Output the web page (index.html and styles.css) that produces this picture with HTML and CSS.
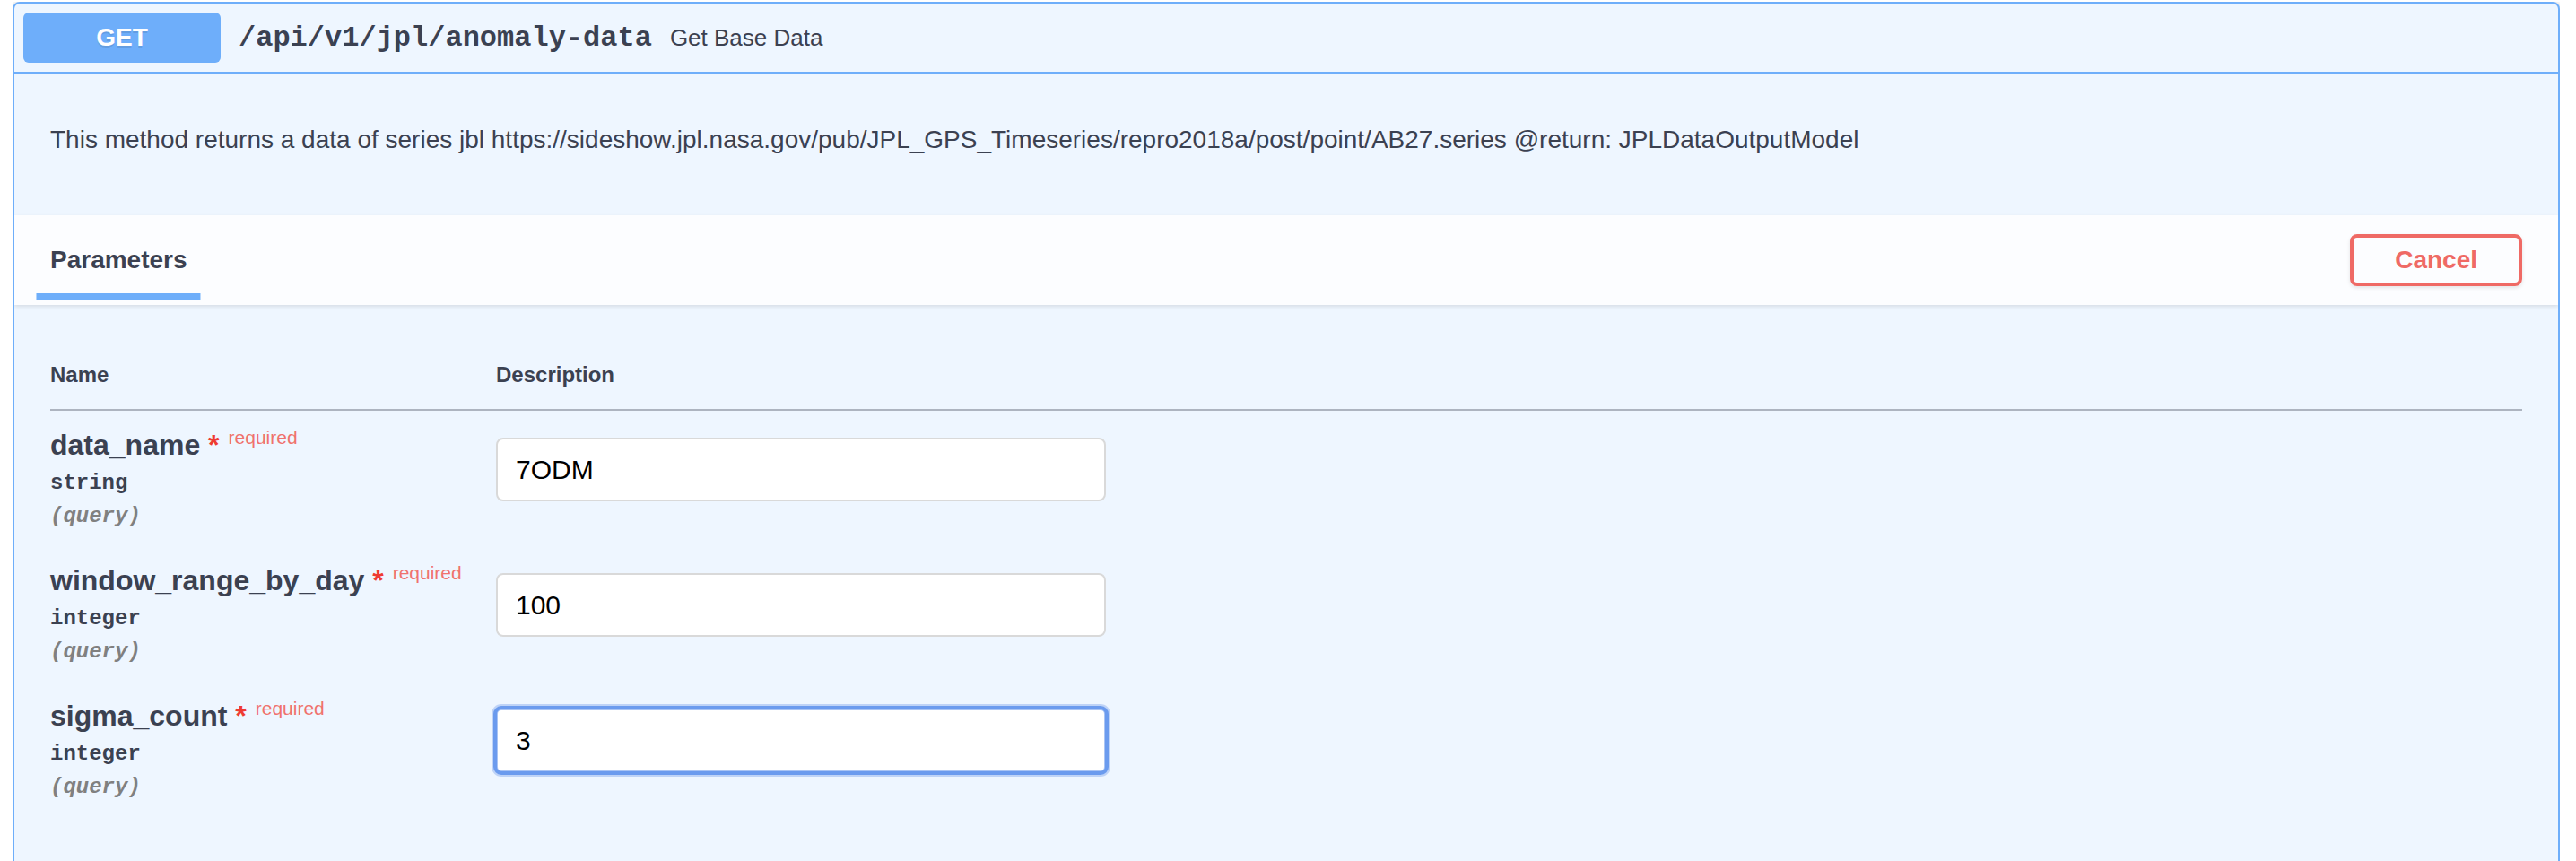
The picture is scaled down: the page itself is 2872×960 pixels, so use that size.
FILE: index.html
```html
<!DOCTYPE html>
<html lang="en">
<head>
<meta charset="utf-8">
<title>anomaly-data</title>
<link rel="stylesheet" href="styles.css">
</head>
<body>
<div class="opblock">
  <div class="summary">
    <span class="method">GET</span>
    <span class="path">/api/v1/jpl/anomaly-data</span>
    <div class="summary-desc">Get Base Data</div>
  </div>
  <div class="desc-wrapper">
    <p>This method returns a data of series jbl https://sideshow.jpl.nasa.gov/pub/JPL_GPS_Timeseries/repro2018a/post/point/AB27.series @return: JPLDataOutputModel</p>
  </div>
  <div class="section-header">
    <div class="tab">
      <h4 class="tab-title"><span class="tab-label">Parameters</span></h4>
    </div>
    <button class="btn-cancel" type="button">Cancel</button>
  </div>
  <div class="table-container">
    <table class="parameters">
      <thead>
        <tr><th class="col-name">Name</th><th class="col-desc">Description</th></tr>
      </thead>
      <tbody>
        <tr>
          <td class="col-name">
            <div class="p-name">data_name<span class="star">&nbsp;*</span><span class="req">required</span></div>
            <div class="p-type">string</div>
            <div class="p-in">(query)</div>
          </td>
          <td class="col-desc"><input class="p-input" type="text" value="7ODM"></td>
        </tr>
        <tr>
          <td class="col-name">
            <div class="p-name">window_range_by_day<span class="star">&nbsp;*</span><span class="req">required</span></div>
            <div class="p-type">integer</div>
            <div class="p-in">(query)</div>
          </td>
          <td class="col-desc"><input class="p-input" type="text" value="100"></td>
        </tr>
        <tr>
          <td class="col-name">
            <div class="p-name">sigma_count<span class="star">&nbsp;*</span><span class="req">required</span></div>
            <div class="p-type">integer</div>
            <div class="p-in">(query)</div>
          </td>
          <td class="col-desc"><input class="p-input is-focused" type="text" value="3"></td>
        </tr>
      </tbody>
    </table>
  </div>
  <div class="block-tail"></div>
</div>
</body>
</html>
```
FILE: styles.css
```css
html, body {
  background: #ffffff;
}
body {
  margin: 2px 18px 0 14px;
  font-family: "Liberation Sans", Arial, sans-serif;
  color: #3b4151;
}
.opblock {
  border: 2px solid #6eaefa;
  border-radius: 8px;
  background: #eef6ff;
  box-shadow: 0 0 6px rgba(0, 0, 0, 0.19);
  overflow: hidden;
}
.summary {
  display: flex;
  align-items: center;
  padding: 10px;
  border-bottom: 2px solid #6eaefa;
}
.method {
  width: 220px;
  height: 56px;
  display: flex;
  align-items: center;
  justify-content: center;
  background: #6eaefa;
  color: #fff;
  border-radius: 6px;
  font-size: 28px;
  font-weight: 700;
  text-shadow: 0 2px 0 rgba(0, 0, 0, 0.1);
}
.path {
  padding: 0 20px;
  font-family: "Liberation Mono", "Courier New", monospace;
  font-size: 32px;
  font-weight: 700;
  color: #3b4151;
}
.summary-desc {
  flex: 1;
  font-size: 26px;
  color: #3b4151;
}
.desc-wrapper {
  padding: 30px 40px;
  margin-bottom: 10px;
}
.desc-wrapper p {
  margin: 28px 0;
  font-size: 28px;
  color: #3b4151;
}
.section-header {
  display: flex;
  align-items: center;
  box-sizing: border-box;
  min-height: 100px;
  padding: 16px 40px;
  background: rgba(255, 255, 255, 0.8);
  box-shadow: 0 2px 4px rgba(0, 0, 0, 0.1);
}
.tab {
  flex: 1;
}
.tab-title {
  margin: 0;
  font-size: 28px;
  font-weight: 700;
  color: #3b4151;
}
.tab-label {
  position: relative;
}
.tab-label::after {
  content: "";
  position: absolute;
  left: 50%;
  bottom: -30px;
  width: 120%;
  height: 8px;
  transform: translateX(-50%);
  background: #6eaefa;
}
.btn-cancel {
  font-family: "Liberation Sans", Arial, sans-serif;
  font-size: 28px;
  font-weight: 700;
  line-height: 30px;
  padding: 10px 46px;
  border: 4px solid #ef6a65;
  border-radius: 8px;
  color: #ef6a65;
  background: transparent;
  box-shadow: 0 2px 4px rgba(0, 0, 0, 0.1);
}
.table-container {
  padding: 40px;
}
.parameters {
  width: 100%;
  border-collapse: collapse;
}
.parameters thead tr {
  border-bottom: 2px solid rgba(59, 65, 81, 0.2);
}
.parameters th {
  text-align: left;
  padding: 24px 0;
  font-size: 24px;
  font-weight: 700;
  color: #3b4151;
}
.parameters th.col-name,
.parameters td.col-name {
  width: 497px;
}
.parameters td {
  vertical-align: top;
  padding: 20px 0 0;
}
.parameters td.col-name {
  padding: 20px 0;
}
.p-name {
  font-size: 32px;
  font-weight: 700;
  color: #3b4151;
}
.star {
  color: #ee3b32;
}
.req {
  position: relative;
  top: -12px;
  padding: 10px;
  font-size: 21px;
  font-weight: 400;
  color: #f0726d;
}
.p-type {
  padding: 10px 0;
  font-family: "Liberation Mono", "Courier New", monospace;
  font-size: 24px;
  font-weight: 700;
  color: #3b4151;
}
.p-in {
  font-family: "Liberation Mono", "Courier New", monospace;
  font-size: 24px;
  font-weight: 700;
  font-style: italic;
  color: #808080;
}
.p-input {
  display: block;
  box-sizing: border-box;
  width: 100%;
  max-width: 680px;
  height: 71px;
  margin: 10px 0;
  padding: 16px 20px;
  border: 2px solid #d9d9d9;
  border-radius: 8px;
  background: #fff;
  font-family: "Liberation Sans", Arial, sans-serif;
  font-size: 30px;
  color: #000;
}
.p-input.is-focused {
  border-color: #a9c4f4;
  outline: 4px solid #6b9bee;
  outline-offset: -1px;
  box-shadow: 0 0 0 5px rgba(170, 196, 244, 0.7);
  border-radius: 6px;
}
.block-tail {
  height: 120px;
}
```
